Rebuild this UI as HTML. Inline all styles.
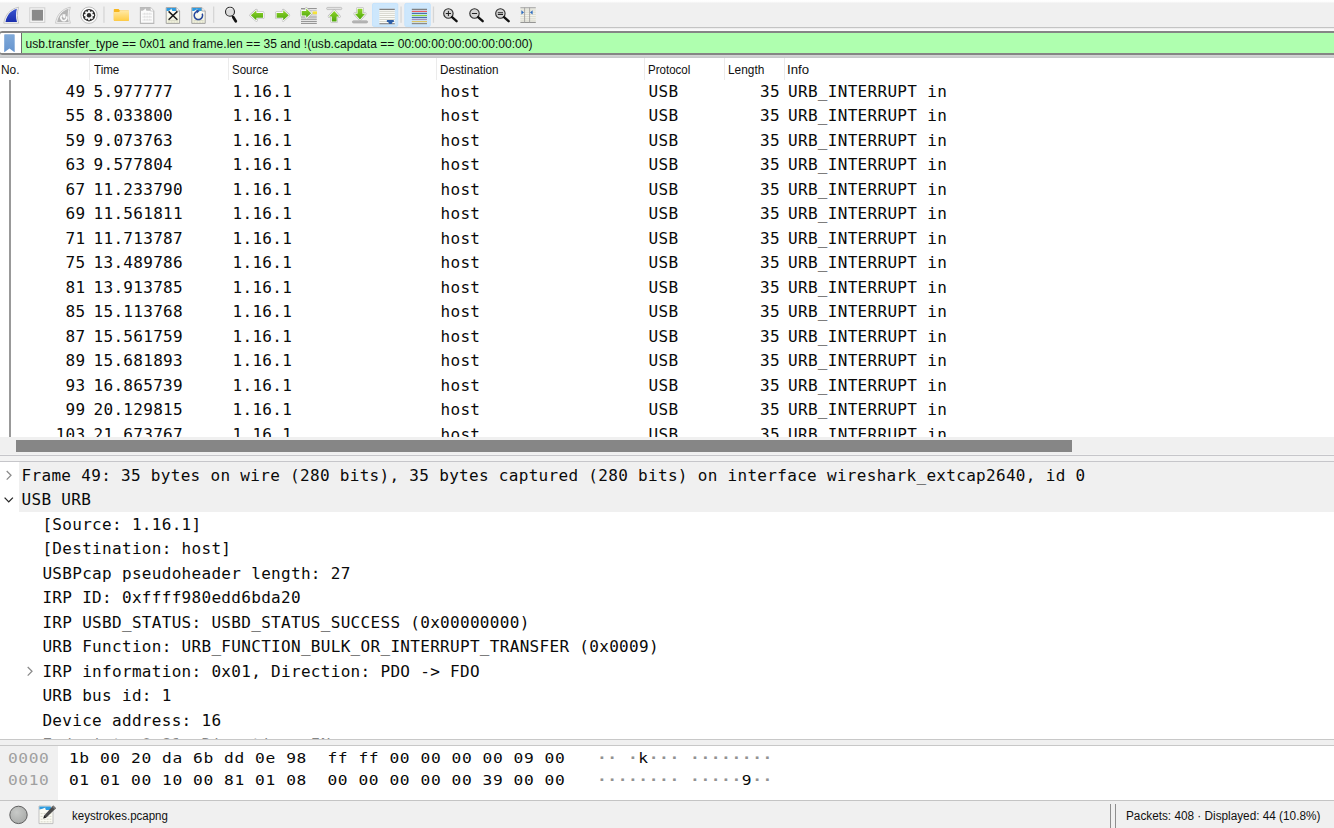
<!DOCTYPE html>
<html><head><meta charset="utf-8"><title>keystrokes.pcapng</title>
<style>
*{box-sizing:border-box;margin:0;padding:0}
html,body{width:1334px;height:828px;overflow:hidden;background:#fff}
body{position:relative;font-family:"Liberation Sans","DejaVu Sans",sans-serif;color:#000}
.abs{position:absolute}
.mono{font-family:"DejaVu Sans Mono","Liberation Mono",monospace;font-size:16px;letter-spacing:0.31px;white-space:pre;color:#0a0a0a}
.hex{font-family:"DejaVu Sans Mono","Liberation Mono",monospace;font-size:14.5px;letter-spacing:0.502px;white-space:pre;color:#0a0a0a;line-height:22px;transform:scaleX(1.12);transform-origin:0 0}
#toolbar{left:0;top:0;width:1334px;height:31px;background:linear-gradient(to bottom,#ffffff 0,#fdfdfd 1.6px,#f0f0f0 3.2px,#f0f0f0 26.6px,#c4c4c4 27.1px,#c4c4c4 28px,#f6f6f6 28.6px,#fafafa 31px)}
#filter{left:-1.5px;top:31px;width:1340px;height:24.1px;background:#afffaf;border:2px solid #858585;border-radius:3.5px}
#fgap{left:0;top:54px;width:1334px;height:3.8px;background:linear-gradient(to bottom,#dcdcdc,#c4c6c8)}
#ftext{left:25.5px;top:36.6px;font-size:12.07px;line-height:14px;color:#101010;white-space:pre}
.ui{font-size:12px;line-height:14px;color:#101010;white-space:pre;transform-origin:0 50%}
.sep{top:58px;width:1px;height:22px;background:#ebebeb}
.row{left:0;width:1334px;height:24.5px}
.row span{position:absolute;top:0;line-height:24.5px}
.drow{left:0;width:1334px;height:24.5px}
.drow span{position:absolute;top:0;line-height:24.5px}
</style></head><body>

<div id="toolbar" class="abs"></div>
<svg class="abs" style="left:0;top:0" width="560" height="31" viewBox="0 0 560 31">
<defs>
<linearGradient id="gBlue" x1="0" y1="0" x2="0" y2="1"><stop offset="0" stop-color="#3a55d0"/><stop offset="1" stop-color="#1a2fae"/></linearGradient>
<linearGradient id="gFold" x1="0" y1="0" x2="0" y2="1"><stop offset="0" stop-color="#ffe9a6"/><stop offset="1" stop-color="#ffcd45"/></linearGradient>
<linearGradient id="gGreen" x1="0" y1="0" x2="0" y2="1"><stop offset="0" stop-color="#8fd42a"/><stop offset="1" stop-color="#4ea60c"/></linearGradient>
<linearGradient id="gDocB" x1="0" y1="0" x2="0" y2="1"><stop offset="0" stop-color="#ffffff"/><stop offset="1" stop-color="#f1f2dc"/></linearGradient>
</defs>
<!-- separators -->
<g fill="#d6d6d6"><rect x="103.3" y="6.5" width="1.3" height="16.3"/><rect x="213" y="6.5" width="1.3" height="16.3"/><rect x="400.4" y="6.5" width="1.3" height="16.3"/><rect x="432.8" y="6.5" width="1.3" height="16.3"/></g>
<!-- highlight boxes -->
<rect x="372.5" y="3.4" width="25.3" height="23" rx="1.4" fill="#cde7fc" stroke="#c2e2fd" stroke-width="0.9"/>
<rect x="404.8" y="3.4" width="25.5" height="23" rx="1.4" fill="#cde7fc" stroke="#c2e2fd" stroke-width="0.9"/>
<!-- 1 shark fin -->
<path d="M3.8 23.2 C5 15 10 9 18.6 7.2 C16.9 12.5 16.9 18 18.7 23.2 Z" fill="#fafafa" stroke="#c4c4c4" stroke-width="1"/>
<path d="M5.5 21.9 C6.6 15.5 10.5 10.4 16.9 8.7 C15.7 13 15.8 18 17 21.9 Z" fill="url(#gBlue)"/>
<!-- 2 stop -->
<rect x="29.8" y="7.8" width="15" height="14.6" fill="#f6f6f6" stroke="#d0d0d0" stroke-width="1"/>
<rect x="31.8" y="9.8" width="11.2" height="10.8" fill="#8a8a8a"/>
<!-- 3 restart fin -->
<path d="M55.5 23.2 C56.7 15 61.7 9 70.3 7.2 C68.6 12.5 68.6 18 70.4 23.2 Z" fill="#f6f6f6" stroke="#cacaca" stroke-width="1"/>
<path d="M57.2 21.9 C58.3 15.5 62.2 10.4 68.6 8.7 C67.4 13 67.5 18 68.7 21.9 Z" fill="#b4b4b4"/>
<path d="M66.4 16.4 A2.9 2.9 0 1 1 61.9 15.6" fill="none" stroke="#f8f8f8" stroke-width="1.6"/>
<path d="M62.4 14.2 H65.4 V17 L64.4 18.4 L62.8 17 Z" fill="#f8f8f8"/>
<!-- 4 gear -->
<circle cx="89" cy="15.2" r="8.2" fill="#fdfdfd" stroke="#a8a8a8" stroke-width="0.7"/>
<circle cx="89" cy="15.2" r="6.2" fill="#2e2e2e"/>
<g fill="#f7f7f7"><rect x="-0.95" y="-5" width="1.9" height="2" transform="translate(89 15.2) rotate(0)"/><rect x="-0.95" y="-5" width="1.9" height="2" transform="translate(89 15.2) rotate(45)"/><rect x="-0.95" y="-5" width="1.9" height="2" transform="translate(89 15.2) rotate(90)"/><rect x="-0.95" y="-5" width="1.9" height="2" transform="translate(89 15.2) rotate(135)"/><rect x="-0.95" y="-5" width="1.9" height="2" transform="translate(89 15.2) rotate(180)"/><rect x="-0.95" y="-5" width="1.9" height="2" transform="translate(89 15.2) rotate(225)"/><rect x="-0.95" y="-5" width="1.9" height="2" transform="translate(89 15.2) rotate(270)"/><rect x="-0.95" y="-5" width="1.9" height="2" transform="translate(89 15.2) rotate(315)"/><circle cx="89" cy="15.2" r="3.8"/></g>
<circle cx="89" cy="15.2" r="2.2" fill="#2a2a2a"/>
<!-- 5 folder -->
<path d="M113.8 9.6 Q113.8 8.9 114.5 8.9 H118.6 L119.8 10.4 H128.2 Q129 10.4 129 11.2 V20 Q129 20.8 128.2 20.8 H114.4 Q113.8 20.8 113.8 20 Z" fill="#f7b61e"/>
<path d="M113.8 12 H119 L120.4 10.4 H128.2 Q129 10.4 129 11.2 V20 Q129 20.8 128.2 20.8 H114.4 Q113.8 20.8 113.8 20 Z" fill="url(#gFold)"/>
<!-- 6 doc gray -->
<g>
<path d="M140.4 7.6 H150.4 L153.8 11 V23.4 H140.4 Z" fill="#fbfbfb" stroke="#b9b9b9" stroke-width="1.1"/>
<path d="M140.8 7.8 H150.4 L151.6 10.8 H146.4 Q145.9 9.6 145.4 8.3 Q144.6 10 142.6 10.8 H140.8 Z" fill="#bdbdbd"/>
<path d="M150.4 7.6 V11 H153.8" fill="#fff" stroke="#c6c6c6" stroke-width="0.8"/>
<g stroke="#dedede" stroke-width="0.9"><path d="M142.4 14 H152"/><path d="M142.4 17 H152"/><path d="M142.4 20 H152"/><path d="M144.6 12.8 V21.4" stroke-dasharray="1.6 1.4"/><path d="M147.2 12.8 V21.4" stroke-dasharray="1.6 1.4"/><path d="M149.8 12.8 V21.4" stroke-dasharray="1.6 1.4"/></g>
</g>
<!-- 7 doc close -->
<g>
<path d="M166.2 7.6 H176.2 L179.6 11 V23.4 H166.2 Z" fill="url(#gDocB)" stroke="#9a9a9a" stroke-width="0.9"/>
<path d="M166.6 7.9 H176 L179.2 11 H172.4 Q171.6 9.8 171.4 8.4 Q170.4 10.2 168.4 11 H166.6 Z" fill="#2e9be0"/>
<path d="M176.2 7.6 V11 H179.6" fill="#fff" stroke="#9a9a9a" stroke-width="0.8"/>
<g stroke="#cfd0bc" stroke-width="0.8"><path d="M168 20.4 H178"/><path d="M168 22 H178" stroke-dasharray="1.6 1.2"/></g>
<path d="M168.6 11.4 L177.4 19.8 M177.4 11.4 L168.6 19.8" stroke="#1a1a1a" stroke-width="1.5" fill="none"/>
</g>
<!-- 8 doc reload -->
<g>
<path d="M191.8 7.6 H201.8 L205.2 11 V23.4 H191.8 Z" fill="url(#gDocB)" stroke="#9a9a9a" stroke-width="0.9"/>
<path d="M192.2 7.9 H201.6 L204.8 11 H198 Q197.2 9.8 197 8.4 Q196 10.2 194 11 H192.2 Z" fill="#2e9be0"/>
<path d="M201.8 7.6 V11 H205.2" fill="#fff" stroke="#9a9a9a" stroke-width="0.8"/>
<g stroke="#cfd0bc" stroke-width="0.8"><path d="M193.6 20.6 H203.6"/><path d="M193.6 22.2 H203.6" stroke-dasharray="1.6 1.2"/></g>
<path d="M202.2 13.6 A4.2 4.2 0 1 1 197 11.4" fill="none" stroke="#27479c" stroke-width="1.5"/>
<path d="M196.2 9.2 L199.6 11 L196.8 13.6 Z" fill="#27479c"/>
</g>
<!-- 9 find -->
<g>
<circle cx="230" cy="11.7" r="4.5" fill="#dcdcdc" stroke="#2a2a2a" stroke-width="1.1"/>
<path d="M227 10.2 A3.5 3.5 0 0 1 232.4 9" fill="none" stroke="#f4f4f4" stroke-width="0.9"/>
<path d="M231.8 15.6 L233.4 17.4" stroke="#222" stroke-width="1.3"/><path d="M233.3 17.2 L235.8 21.3" stroke="#111" stroke-width="2.7" stroke-linecap="round"/>
</g>
<!-- 10 back arrow -->
<path d="M250.8 15.3 L256.4 10.3 V12.9 H263 V17.7 H256.4 V20.3 Z" fill="none" stroke="#adadad" stroke-width="2.7" stroke-linejoin="round"/><path d="M250.8 15.3 L256.4 10.3 V12.9 H263 V17.7 H256.4 V20.3 Z" fill="url(#gGreen)" stroke="#fbfbfb" stroke-width="1.7" stroke-linejoin="round"/><path d="M250.8 15.3 L256.4 10.3 V12.9 H263 V17.7 H256.4 V20.3 Z" fill="url(#gGreen)"/>
<!-- 11 fwd arrow -->
<path d="M288.8 15.3 L283.2 10.3 V12.9 H276.6 V17.7 H283.2 V20.3 Z" fill="none" stroke="#adadad" stroke-width="2.7" stroke-linejoin="round"/><path d="M288.8 15.3 L283.2 10.3 V12.9 H276.6 V17.7 H283.2 V20.3 Z" fill="url(#gGreen)" stroke="#fbfbfb" stroke-width="1.7" stroke-linejoin="round"/><path d="M288.8 15.3 L283.2 10.3 V12.9 H276.6 V17.7 H283.2 V20.3 Z" fill="url(#gGreen)"/>
<!-- 12 goto -->
<g>
<g stroke="#8c8c8c" stroke-width="1"><path d="M301 8.6 H316.8"/><path d="M301 10.6 H316.8" stroke="#c8c8c8"/><path d="M301 15 H316.8" stroke="#bdbdbd"/><path d="M301 17 H316.8"/><path d="M301 19.2 H316.8"/><path d="M301 21.4 H316.8"/><path d="M301 23.4 H316.8"/></g>
<rect x="312.6" y="11.4" width="4.4" height="2.8" fill="#f5e23a"/>
<path d="M311.2 13.2 L306.2 8.6 V10.9 H301.7 V15.5 H306.2 V17.8 Z" fill="none" stroke="#adadad" stroke-width="2.7" stroke-linejoin="round"/><path d="M311.2 13.2 L306.2 8.6 V10.9 H301.7 V15.5 H306.2 V17.8 Z" fill="url(#gGreen)" stroke="#fbfbfb" stroke-width="1.7" stroke-linejoin="round"/><path d="M311.2 13.2 L306.2 8.6 V10.9 H301.7 V15.5 H306.2 V17.8 Z" fill="url(#gGreen)"/>
</g>
<!-- 13 first -->
<g>
<rect x="326.6" y="7.4" width="15.2" height="2.2" rx="1.1" fill="#e2e2e2" stroke="#b0b0b0" stroke-width="0.7"/>
<path d="M334.2 10.9 L339.3 16.5 H336.6 V21.4 H331.8 V16.5 H329.1 Z" fill="none" stroke="#adadad" stroke-width="2.7" stroke-linejoin="round"/><path d="M334.2 10.9 L339.3 16.5 H336.6 V21.4 H331.8 V16.5 H329.1 Z" fill="url(#gGreen)" stroke="#fbfbfb" stroke-width="1.7" stroke-linejoin="round"/><path d="M334.2 10.9 L339.3 16.5 H336.6 V21.4 H331.8 V16.5 H329.1 Z" fill="url(#gGreen)"/>
</g>
<!-- 14 last -->
<g>
<rect x="352.4" y="20.8" width="15.2" height="2.2" rx="1.1" fill="#b8b8b8" stroke="#a0a0a0" stroke-width="0.6"/>
<path d="M360 19.4 L365.1 13.8 H362.4 V8.7 H357.6 V13.8 H354.9 Z" fill="none" stroke="#adadad" stroke-width="2.7" stroke-linejoin="round"/><path d="M360 19.4 L365.1 13.8 H362.4 V8.7 H357.6 V13.8 H354.9 Z" fill="url(#gGreen)" stroke="#fbfbfb" stroke-width="1.7" stroke-linejoin="round"/><path d="M360 19.4 L365.1 13.8 H362.4 V8.7 H357.6 V13.8 H354.9 Z" fill="url(#gGreen)"/>
</g>
<!-- 15 autoscroll -->
<g>
<rect x="379.4" y="8.8" width="15.4" height="15.4" fill="#fbfbf7"/>
<g stroke="#d2d2c8" stroke-width="0.9"><path d="M379.4 11.4 H394.8"/><path d="M379.4 13.4 H394.8"/><path d="M379.4 15.5 H394.8"/><path d="M379.4 17.5 H394.8"/><path d="M379.4 19.5 H394.8"/><path d="M379.4 21.5 H394.8"/></g>
<path d="M379.4 9.35 H394.8" stroke="#7a7a7a" stroke-width="1.2"/>
<path d="M379.4 23.7 H394.8" stroke="#8a8a8a" stroke-width="1.2"/>
<path d="M387.4 20.1 H393.3 Q393.9 20.1 393.9 20.7 V21.5 Q393.9 22 393.3 22 H392.6 L391.6 23.9 H389.2 L388.2 22 H387.4 Q386.8 22 386.8 21.5 V20.7 Q386.8 20.1 387.4 20.1 Z" fill="#2d5fa8"/>
</g>
<!-- 16 colorize -->
<g stroke-width="1.2">
<path d="M411.8 9.35 H427" stroke="#7c7c7c"/><path d="M411.8 11.4 H427" stroke="#ea5f5f"/><path d="M411.8 13.4 H427" stroke="#4c6fa8"/><path d="M411.8 15.5 H427" stroke="#8fd13a"/><path d="M411.8 17.5 H427" stroke="#4c6fa8"/><path d="M411.8 19.5 H427" stroke="#a98db5"/><path d="M411.8 21.6 H427" stroke="#dcc566"/><path d="M411.8 23.6 H427" stroke="#8a8a8a"/>
</g>
<!-- 17-19 zoom -->
<g>
<circle cx="448.4" cy="13.5" r="4.7" fill="#d4d4d4" stroke="#2a2a2a" stroke-width="1.1"/>
<path d="M445.8 13.5 H451 M448.4 10.9 V16.1" stroke="#222" stroke-width="1"/>
<path d="M452 17.2 L456.6 21.2" stroke="#111" stroke-width="2.4" stroke-linecap="round"/>
<circle cx="474.5" cy="13.5" r="4.7" fill="#d4d4d4" stroke="#2a2a2a" stroke-width="1.1"/>
<path d="M471.9 13.5 H477.1" stroke="#222" stroke-width="1"/>
<path d="M478.1 17.2 L482.7 21.2" stroke="#111" stroke-width="2.4" stroke-linecap="round"/>
<circle cx="500.4" cy="13.5" r="4.7" fill="#d4d4d4" stroke="#2a2a2a" stroke-width="1.1"/>
<path d="M497.8 12.7 H503 M497.8 14.5 H503" stroke="#222" stroke-width="1.1"/>
<path d="M504 17.2 L508.6 21.2" stroke="#111" stroke-width="2.4" stroke-linecap="round"/>
</g>
<!-- 20 resize columns -->
<g>
<rect x="520.4" y="7.6" width="15.4" height="15" fill="#f4f4ec"/>
<g stroke="#d4d4c8" stroke-width="0.8"><path d="M520.4 10 H535.8"/><path d="M520.4 12.2 H535.8"/><path d="M520.4 14.4 H535.8"/><path d="M520.4 16.6 H535.8"/><path d="M520.4 18.8 H535.8"/><path d="M520.4 20.8 H535.8"/></g>
<path d="M520.4 7.8 H535.8" stroke="#9a9a9a" stroke-width="1"/>
<path d="M520.4 22.4 H535.8" stroke="#8a8a8a" stroke-width="1"/>
<path d="M524.6 7.6 V22.6 M529.6 7.6 V22.6" stroke="#a0a0a0" stroke-width="0.9"/>
<path d="M521.4 10.2 L524 12.4 L521.4 14.6 Z" fill="#2d6cc0"/>
<path d="M532.6 10.2 L530 12.4 L532.6 14.6 Z" fill="#2d6cc0"/>
</g>
</svg>

<div id="fgap" class="abs"></div><div id="filter" class="abs"></div>
<div class="abs" style="left:0.4px;top:32.9px;width:21.8px;height:20.3px;background:#fff;border-right:1.1px solid #6c6c6c;border-radius:1.5px 0 0 1.5px"></div>
<svg class="abs" style="left:0;top:31px" width="22" height="24" viewBox="0 0 22 24"><defs><linearGradient id="gBm" x1="0" y1="0" x2="0" y2="1"><stop offset="0" stop-color="#7fa9d9"/><stop offset="1" stop-color="#6795cf"/></linearGradient></defs><path d="M4.2 3.9 Q4.2 3.2 4.9 3.2 H14 Q14.7 3.2 14.7 3.9 V20.4 Q14.7 21.3 13.9 20.8 L9.45 17.6 L5 20.8 Q4.2 21.3 4.2 20.4 Z" fill="url(#gBm)"/></svg>
<div id="ftext" class="abs">usb.transfer_type == 0x01 and frame.len == 35 and !(usb.capdata == 00:00:00:00:00:00:00:00)</div>
<div class="abs ui" style="left:1.3px;top:62.6px;transform:scaleX(0.99)">No.</div>
<div class="abs ui" style="left:93.7px;top:62.6px;transform:scaleX(0.963)">Time</div>
<div class="abs ui" style="left:231.5px;top:62.6px;transform:scaleX(0.958)">Source</div>
<div class="abs ui" style="left:440.3px;top:62.6px;transform:scaleX(0.975)">Destination</div>
<div class="abs ui" style="left:648.3px;top:62.6px;transform:scaleX(0.96)">Protocol</div>
<div class="abs ui" style="left:728.2px;top:62.6px;transform:scaleX(0.989)">Length</div>
<div class="abs ui" style="left:787.1px;top:62.6px;transform:scaleX(1.1)">Info</div>
<div class="abs sep" style="left:89px"></div>
<div class="abs sep" style="left:228px"></div>
<div class="abs sep" style="left:436px"></div>
<div class="abs sep" style="left:644px"></div>
<div class="abs sep" style="left:724px"></div>
<div class="abs sep" style="left:784px"></div>
<div class="abs" style="left:0;top:80px;width:1334px;height:357px;overflow:hidden">
<div class="abs" style="left:9.4px;top:0;width:1.4px;height:357px;background:#999"></div>
<div class="abs row mono" style="top:-0.25px"><span style="right:1248.5px">49</span><span style="left:93.5px">5.977777</span><span style="left:232.5px">1.16.1</span><span style="left:440.5px">host</span><span style="left:648.5px">USB</span><span style="right:554px">35</span><span style="left:788px">URB_INTERRUPT in</span></div>
<div class="abs row mono" style="top:24.25px"><span style="right:1248.5px">55</span><span style="left:93.5px">8.033800</span><span style="left:232.5px">1.16.1</span><span style="left:440.5px">host</span><span style="left:648.5px">USB</span><span style="right:554px">35</span><span style="left:788px">URB_INTERRUPT in</span></div>
<div class="abs row mono" style="top:48.75px"><span style="right:1248.5px">59</span><span style="left:93.5px">9.073763</span><span style="left:232.5px">1.16.1</span><span style="left:440.5px">host</span><span style="left:648.5px">USB</span><span style="right:554px">35</span><span style="left:788px">URB_INTERRUPT in</span></div>
<div class="abs row mono" style="top:73.25px"><span style="right:1248.5px">63</span><span style="left:93.5px">9.577804</span><span style="left:232.5px">1.16.1</span><span style="left:440.5px">host</span><span style="left:648.5px">USB</span><span style="right:554px">35</span><span style="left:788px">URB_INTERRUPT in</span></div>
<div class="abs row mono" style="top:97.75px"><span style="right:1248.5px">67</span><span style="left:93.5px">11.233790</span><span style="left:232.5px">1.16.1</span><span style="left:440.5px">host</span><span style="left:648.5px">USB</span><span style="right:554px">35</span><span style="left:788px">URB_INTERRUPT in</span></div>
<div class="abs row mono" style="top:122.25px"><span style="right:1248.5px">69</span><span style="left:93.5px">11.561811</span><span style="left:232.5px">1.16.1</span><span style="left:440.5px">host</span><span style="left:648.5px">USB</span><span style="right:554px">35</span><span style="left:788px">URB_INTERRUPT in</span></div>
<div class="abs row mono" style="top:146.75px"><span style="right:1248.5px">71</span><span style="left:93.5px">11.713787</span><span style="left:232.5px">1.16.1</span><span style="left:440.5px">host</span><span style="left:648.5px">USB</span><span style="right:554px">35</span><span style="left:788px">URB_INTERRUPT in</span></div>
<div class="abs row mono" style="top:171.25px"><span style="right:1248.5px">75</span><span style="left:93.5px">13.489786</span><span style="left:232.5px">1.16.1</span><span style="left:440.5px">host</span><span style="left:648.5px">USB</span><span style="right:554px">35</span><span style="left:788px">URB_INTERRUPT in</span></div>
<div class="abs row mono" style="top:195.75px"><span style="right:1248.5px">81</span><span style="left:93.5px">13.913785</span><span style="left:232.5px">1.16.1</span><span style="left:440.5px">host</span><span style="left:648.5px">USB</span><span style="right:554px">35</span><span style="left:788px">URB_INTERRUPT in</span></div>
<div class="abs row mono" style="top:220.25px"><span style="right:1248.5px">85</span><span style="left:93.5px">15.113768</span><span style="left:232.5px">1.16.1</span><span style="left:440.5px">host</span><span style="left:648.5px">USB</span><span style="right:554px">35</span><span style="left:788px">URB_INTERRUPT in</span></div>
<div class="abs row mono" style="top:244.75px"><span style="right:1248.5px">87</span><span style="left:93.5px">15.561759</span><span style="left:232.5px">1.16.1</span><span style="left:440.5px">host</span><span style="left:648.5px">USB</span><span style="right:554px">35</span><span style="left:788px">URB_INTERRUPT in</span></div>
<div class="abs row mono" style="top:269.25px"><span style="right:1248.5px">89</span><span style="left:93.5px">15.681893</span><span style="left:232.5px">1.16.1</span><span style="left:440.5px">host</span><span style="left:648.5px">USB</span><span style="right:554px">35</span><span style="left:788px">URB_INTERRUPT in</span></div>
<div class="abs row mono" style="top:293.75px"><span style="right:1248.5px">93</span><span style="left:93.5px">16.865739</span><span style="left:232.5px">1.16.1</span><span style="left:440.5px">host</span><span style="left:648.5px">USB</span><span style="right:554px">35</span><span style="left:788px">URB_INTERRUPT in</span></div>
<div class="abs row mono" style="top:318.25px"><span style="right:1248.5px">99</span><span style="left:93.5px">20.129815</span><span style="left:232.5px">1.16.1</span><span style="left:440.5px">host</span><span style="left:648.5px">USB</span><span style="right:554px">35</span><span style="left:788px">URB_INTERRUPT in</span></div>
<div class="abs row mono" style="top:342.75px"><span style="right:1248.5px">103</span><span style="left:93.5px">21.673767</span><span style="left:232.5px">1.16.1</span><span style="left:440.5px">host</span><span style="left:648.5px">USB</span><span style="right:554px">35</span><span style="left:788px">URB_INTERRUPT in</span></div>
</div>
<div class="abs" style="left:0;top:437px;width:1334px;height:17px;background:#f0f0f0"></div>
<div class="abs" style="left:16px;top:440px;width:1056px;height:11.8px;background:#868686"></div>
<div class="abs" style="left:0;top:454px;width:1334px;height:8px;background:#f3f3f3"></div>
<div class="abs" style="left:0;top:455px;width:1334px;height:1px;background:#c6c6ca"></div>
<div class="abs" style="left:0;top:461px;width:1334px;height:1px;background:#c6c6ca"></div>
<div class="abs" style="left:0;top:462px;width:1334px;height:277px;overflow:hidden;background:#fff">
<div class="abs" style="left:18.8px;top:0.0px;width:1316px;height:24.5px;background:#f0f0f0"></div>
<svg class="abs" style="left:0px;top:0.0px" width="20" height="25" viewBox="0 0 20 25"><path d="M6.7 9 L11 13.3 L6.7 17.6" fill="none" stroke="#8a8a8a" stroke-width="1.25"/></svg>
<div class="abs drow mono" style="top:1.6px;"><span style="left:21.6px">Frame 49: 35 bytes on wire (280 bits), 35 bytes captured (280 bits) on interface wireshark_extcap2640, id 0</span></div>
<div class="abs" style="left:18.8px;top:24.5px;width:1316px;height:25px;background:#f0f0f0"></div>
<svg class="abs" style="left:0px;top:24.5px" width="20" height="25" viewBox="0 0 20 25"><path d="M4.6 10.6 L8.75 14.9 L12.9 10.6" fill="none" stroke="#262626" stroke-width="1.3"/></svg>
<div class="abs drow mono" style="top:26.1px;"><span style="left:21.6px">USB URB</span></div>
<div class="abs drow mono" style="top:50.6px;"><span style="left:42.4px">[Source: 1.16.1]</span></div>
<div class="abs drow mono" style="top:75.1px;"><span style="left:42.4px">[Destination: host]</span></div>
<div class="abs drow mono" style="top:99.6px;"><span style="left:42.4px">USBPcap pseudoheader length: 27</span></div>
<div class="abs drow mono" style="top:124.1px;"><span style="left:42.4px">IRP ID: 0xffff980edd6bda20</span></div>
<div class="abs drow mono" style="top:148.6px;"><span style="left:42.4px">IRP USBD_STATUS: USBD_STATUS_SUCCESS (0x00000000)</span></div>
<div class="abs drow mono" style="top:173.1px;"><span style="left:42.4px">URB Function: URB_FUNCTION_BULK_OR_INTERRUPT_TRANSFER (0x0009)</span></div>
<svg class="abs" style="left:20.8px;top:196.0px" width="20" height="25" viewBox="0 0 20 25"><path d="M6.7 9 L11 13.3 L6.7 17.6" fill="none" stroke="#8a8a8a" stroke-width="1.25"/></svg>
<div class="abs drow mono" style="top:197.6px;"><span style="left:42.4px">IRP information: 0x01, Direction: PDO -&gt; FDO</span></div>
<div class="abs drow mono" style="top:222.1px;"><span style="left:42.4px">URB bus id: 1</span></div>
<div class="abs drow mono" style="top:246.6px;"><span style="left:42.4px">Device address: 16</span></div>
<div class="abs drow mono" style="top:271.1px;"><span style="left:42.4px">Endpoint: 0x81, Direction: IN</span></div>
<div class="abs" style="left:0;top:276px;width:1334px;height:1px;background:rgba(255,255,255,0.5)"></div>
</div>
<div class="abs" style="left:0;top:739px;width:1334px;height:7px;background:#f0f0f0"></div>
<div class="abs" style="left:0;top:739px;width:1334px;height:1px;background:#c8c8c8"></div>
<div class="abs" style="left:0;top:745px;width:1334px;height:1px;background:#c8c8c8"></div>
<div class="abs" style="left:0;top:746px;width:1334px;height:54px;background:#fff"></div>
<div class="abs" style="left:0;top:746px;width:58.4px;height:54px;background:#f0f0f0"></div>
<div class="abs hex" style="left:7.9px;top:746.6px;color:#a0a0a0">0000</div>
<div class="abs hex" style="left:68.7px;top:746.6px">1b 00 20 da 6b dd 0e 98  ff ff 00 00 00 00 09 00</div>
<div class="abs hex" style="left:596.7px;top:746.6px"><span style="color:#929292;font-weight:bold">·</span><span style="color:#929292;font-weight:bold">·</span> <span style="color:#929292;font-weight:bold">·</span>k<span style="color:#929292;font-weight:bold">·</span><span style="color:#929292;font-weight:bold">·</span><span style="color:#929292;font-weight:bold">·</span> <span style="color:#929292;font-weight:bold">·</span><span style="color:#929292;font-weight:bold">·</span><span style="color:#929292;font-weight:bold">·</span><span style="color:#929292;font-weight:bold">·</span><span style="color:#929292;font-weight:bold">·</span><span style="color:#929292;font-weight:bold">·</span><span style="color:#929292;font-weight:bold">·</span><span style="color:#929292;font-weight:bold">·</span></div>
<div class="abs hex" style="left:7.9px;top:768.9px;color:#a0a0a0">0010</div>
<div class="abs hex" style="left:68.7px;top:768.9px">01 01 00 10 00 81 01 08  00 00 00 00 00 39 00 00</div>
<div class="abs hex" style="left:596.7px;top:768.9px"><span style="color:#929292;font-weight:bold">·</span><span style="color:#929292;font-weight:bold">·</span><span style="color:#929292;font-weight:bold">·</span><span style="color:#929292;font-weight:bold">·</span><span style="color:#929292;font-weight:bold">·</span><span style="color:#929292;font-weight:bold">·</span><span style="color:#929292;font-weight:bold">·</span><span style="color:#929292;font-weight:bold">·</span> <span style="color:#929292;font-weight:bold">·</span><span style="color:#929292;font-weight:bold">·</span><span style="color:#929292;font-weight:bold">·</span><span style="color:#929292;font-weight:bold">·</span><span style="color:#929292;font-weight:bold">·</span>9<span style="color:#929292;font-weight:bold">·</span><span style="color:#929292;font-weight:bold">·</span></div>
<div class="abs" style="left:0;top:800px;width:1334px;height:28px;background:#f0f0f0;border-top:1px solid #c4c4c4"></div>
<div class="abs ui" style="left:72.1px;top:808.7px;transform:scaleX(0.958)">keystrokes.pcapng</div>
<div class="abs ui" style="left:1125.6px;top:808.7px;transform:scaleX(0.981)">Packets: 408 · Displayed: 44 (10.8%)</div>
<div class="abs" style="left:1110px;top:804.4px;width:1px;height:24px;background:#8e8e8e"></div>
<div class="abs" style="left:1115px;top:804.4px;width:1px;height:24px;background:#8e8e8e"></div>
<svg class="abs" style="left:0;top:800px" width="70" height="28" viewBox="0 0 70 28">
<defs><radialGradient id="gBall" cx="0.4" cy="0.35" r="0.7"><stop offset="0" stop-color="#c8cac8"/><stop offset="1" stop-color="#a8aaa8"/></radialGradient></defs>
<circle cx="18.5" cy="14.9" r="8.7" fill="url(#gBall)" stroke="#5e5e5e" stroke-width="1"/>
<g>
<path d="M39 6 H50.6 L53 8.6 V23.6 H39 Z" fill="#fbfbf3" stroke="#b4b4b4" stroke-width="0.8"/>
<path d="M39.4 6.4 H50.4 L52.6 10 H46 Q44.8 8.8 45.4 7.4 Q42.6 9 39.4 9.4 Z" fill="#2e9be0"/>
<g stroke="#d2d2c4" stroke-width="0.9"><path d="M40.6 13.6 H51.4" stroke-dasharray="2 1"/><path d="M40.6 16.4 H51.4" stroke-dasharray="2 1"/><path d="M40.6 19.2 H51.4" stroke-dasharray="2 1"/><path d="M40.6 21.8 H51.4" stroke-dasharray="2 1"/></g>
<path d="M53.2 5.6 L56 8.2 L46.4 17.6 L43.4 18.6 L44.2 15.4 Z" fill="#4a4a4a"/>
<path d="M53.2 5.6 L56 8.2 L54.8 9.4 L52 6.8 Z" fill="#7a7a7a"/>
<path d="M43.4 18.6 L44.2 15.8 L46.2 17.6 Z" fill="#1e1e1e"/>
</g>
</svg>

</body></html>
